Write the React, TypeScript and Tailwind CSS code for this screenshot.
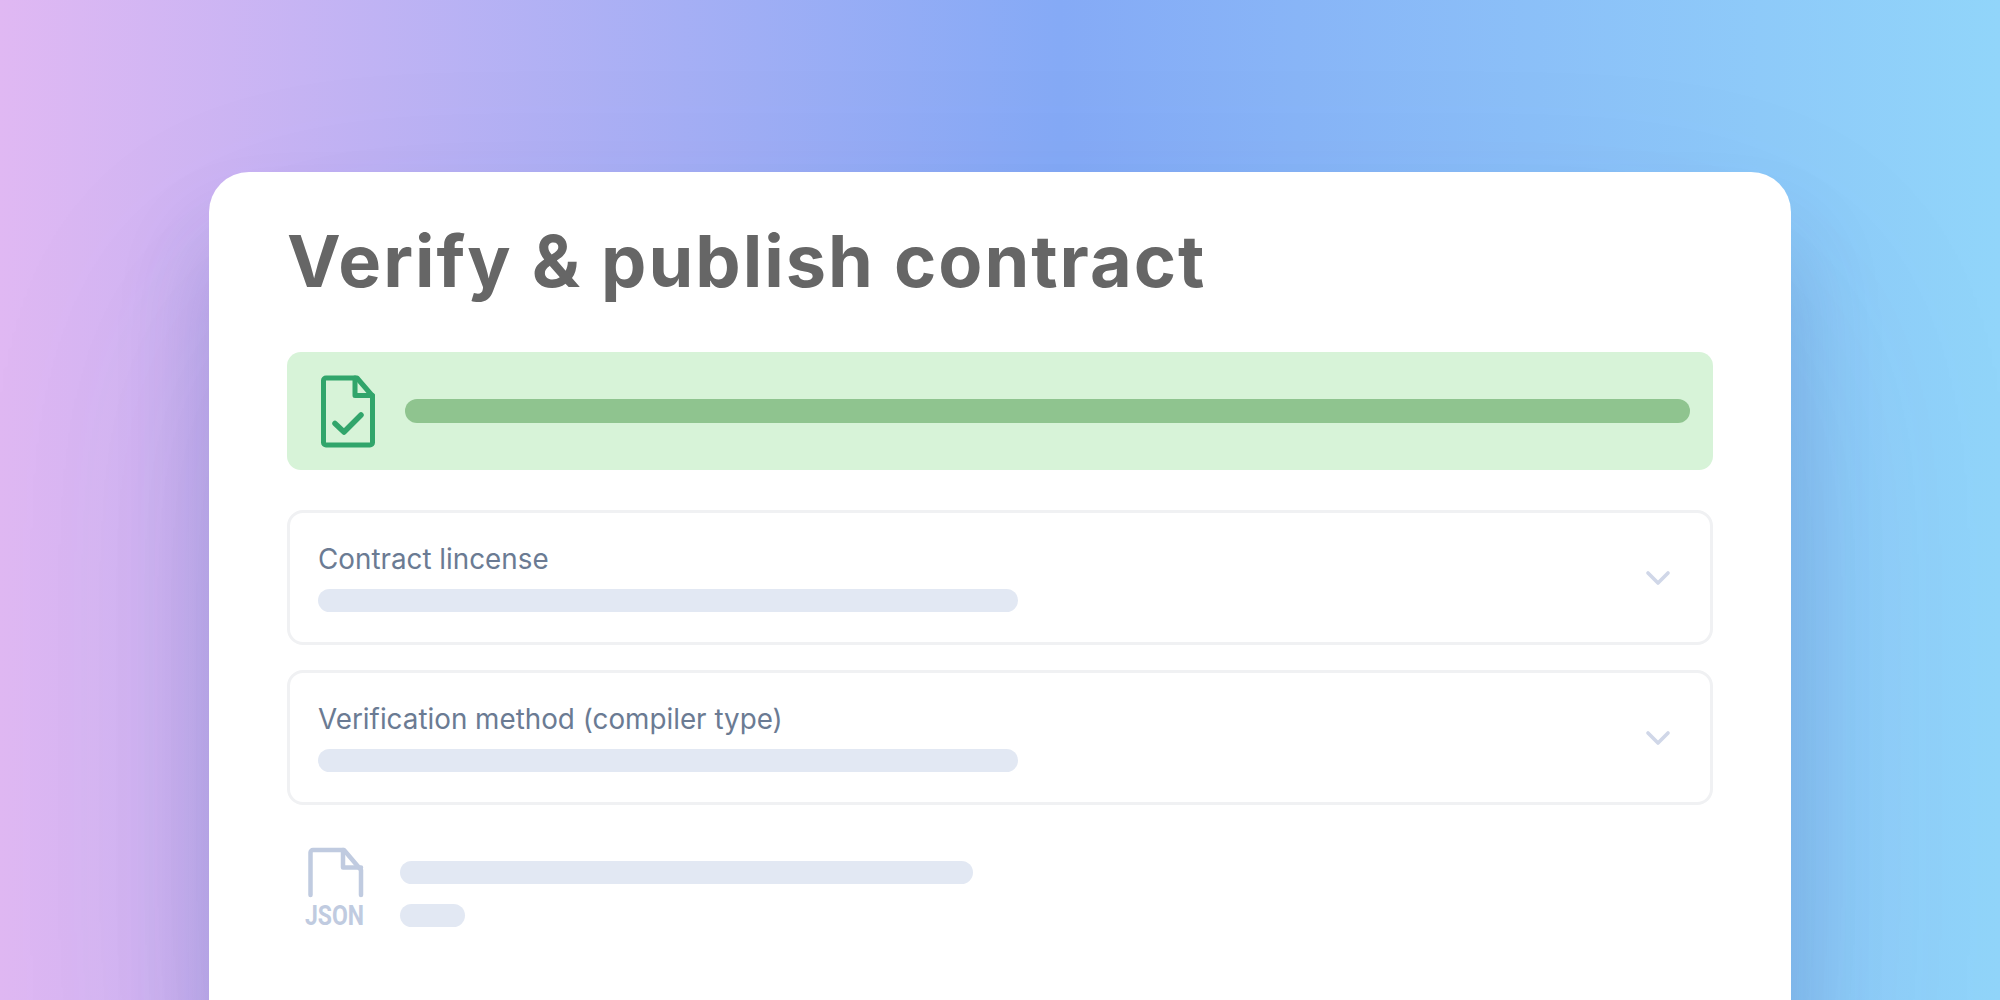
import { ChevronDown } from 'lucide-react';

const FileCheckIcon = () => (
  <svg viewBox="0 0 54 73" className="w-[54px] h-[73px] shrink-0" fill="none" stroke="#31a56b" strokeWidth="5" strokeLinejoin="round" strokeLinecap="round">
    <path d="M36 3H5a2.5 2.5 0 0 0-2.5 2.5v62A2.5 2.5 0 0 0 5 70h44a2.5 2.5 0 0 0 2.5-2.5V21L36 3Z" />
    <path d="M34 3v17.5h17.5" />
    <path d="m14 48.5 9 8.5 17-17" strokeWidth="5.5" />
  </svg>
);

const JsonIcon = () => (
  <div className="w-[60px] shrink-0 flex flex-col items-start">
    <svg viewBox="0 0 56 52" className="w-[56px] h-[52px] ml-[3px]" fill="none" stroke="#c0cbe0" strokeWidth="4.5" strokeLinejoin="round" strokeLinecap="round">
      <path d="M2.5 48V5.5A2.5 2.5 0 0 1 5 3h31l17 20v25" />
      <path d="M35 3v17.5h18" />
    </svg>
    <span className="mt-[1px] text-[28px] leading-[32px] font-bold text-[#c0cbe0] origin-left scale-x-[0.82] font-['Roboto',sans-serif]">JSON</span>
  </div>
);

const SelectBox = ({ label }: { label: string }) => (
  <div className="h-[135px] border-[3px] border-[#f0f1f3] rounded-[16px] pl-[28px] pr-[32px] flex items-center justify-between">
    <div className="w-[700px]">
      <div className="text-[27.8px] leading-[32px] text-[#6b7b93] font-['Inter',sans-serif]">{label}</div>
      <div className="mt-[14px] h-[23px] rounded-full bg-[#e2e8f3]" />
    </div>
    <ChevronDown size={40} strokeWidth={2.2} className="text-[#d0d7e8]" />
  </div>
);

export default function App() {
  return (
    <div className="h-[1000px] w-full overflow-hidden flex justify-center pt-[172px] bg-[linear-gradient(90deg,#e0b8f3_0%,#85aaf6_53%,#91d5fa_100%)]">
      <div className="w-[1582px] h-[900px] shrink-0 bg-white rounded-[40px] px-[78px] shadow-[0_70px_90px_rgba(40,70,150,0.22),0_120px_300px_rgba(60,70,150,0.1)]">
        <h1 className="mt-[40px] pt-[9px] text-[72px] leading-[80px] font-bold tracking-[2px] text-[#666666] font-['Inter',sans-serif]">Verify &amp; publish contract</h1>

        <div className="mt-[51px] h-[118px] rounded-[14px] bg-[#d7f3d8] flex items-center pl-[34px] pr-[23px] gap-[30px]">
          <FileCheckIcon />
          <div className="h-[24px] flex-1 rounded-full bg-[#8fc48f]" />
        </div>

        <div className="mt-[40px] flex flex-col gap-[25px]">
          <SelectBox label="Contract lincense" />
          <SelectBox label="Verification method (compiler type)" />
        </div>

        <div className="mt-[42px] flex items-start gap-[35px] pl-[18px]">
          <JsonIcon />
          <div className="pt-[14px]">
            <div className="h-[23px] w-[573px] rounded-full bg-[#e2e8f3]" />
            <div className="mt-[20px] h-[23px] w-[65px] rounded-full bg-[#e2e8f3]" />
          </div>
        </div>
      </div>
    </div>
  );
}
